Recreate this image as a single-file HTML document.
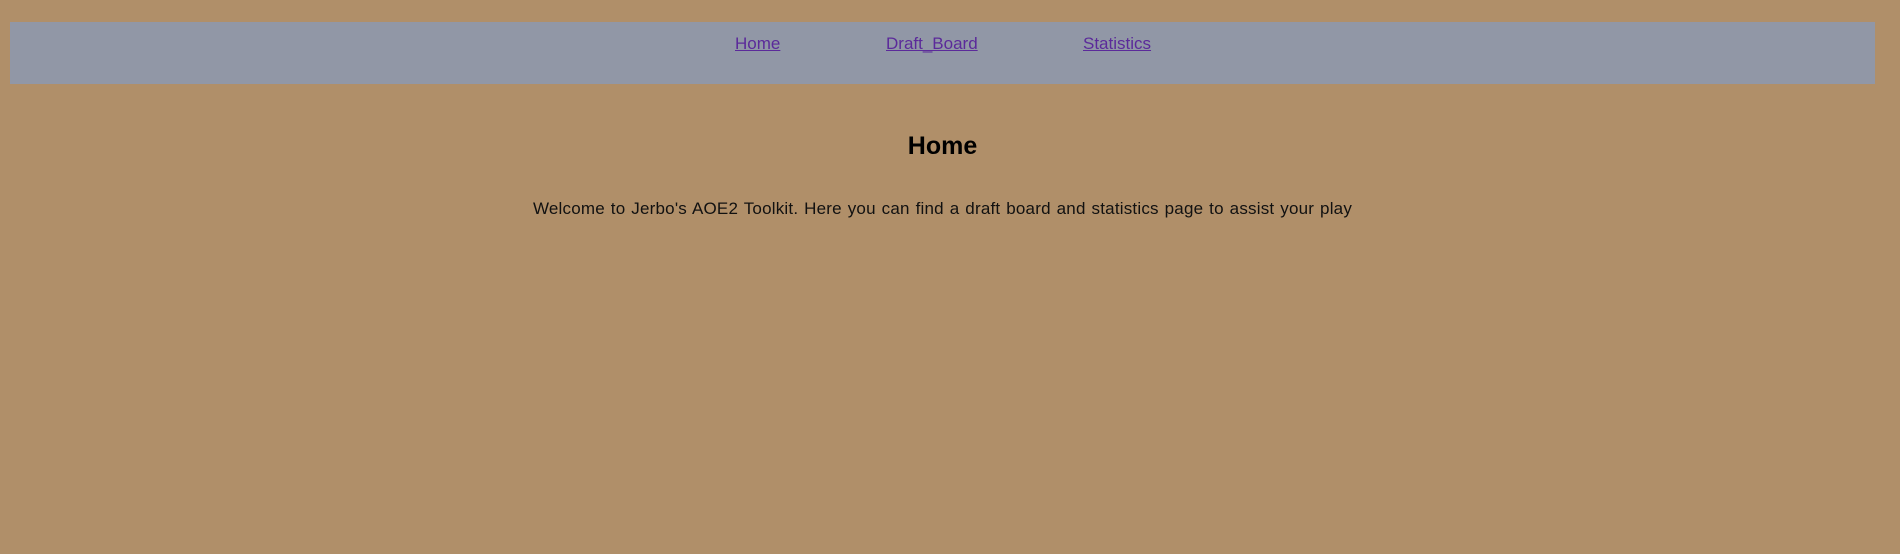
<!DOCTYPE html>
<html><head><style>
html,body{margin:0;padding:0;width:1900px;height:554px;background:#b08f69;overflow:hidden;font-family:"Liberation Sans",sans-serif;}
.nav{position:absolute;left:10px;top:22px;width:1865px;height:62px;background:#9197a6;}
.nav a{position:absolute;top:12px;color:#5b2a9a;font-size:17px;text-decoration:underline;white-space:nowrap;letter-spacing:0}
h1{position:absolute;left:0;width:1885px;top:132px;margin:0;text-align:center;font-size:25px;font-weight:bold;color:#000}
p{position:absolute;left:0;width:1885px;top:199px;margin:0;text-align:center;font-size:17px;color:#111;letter-spacing:0.2px;word-spacing:1px}
</style></head><body>
<div class="nav">
<a style="left:725px">Home</a>
<a style="left:876px">Draft_Board</a>
<a style="left:1073px">Statistics</a>
</div>
<h1>Home</h1>
<p>Welcome to Jerbo's AOE2 Toolkit. Here you can find a draft board and statistics page to assist your play</p>
</body></html>
